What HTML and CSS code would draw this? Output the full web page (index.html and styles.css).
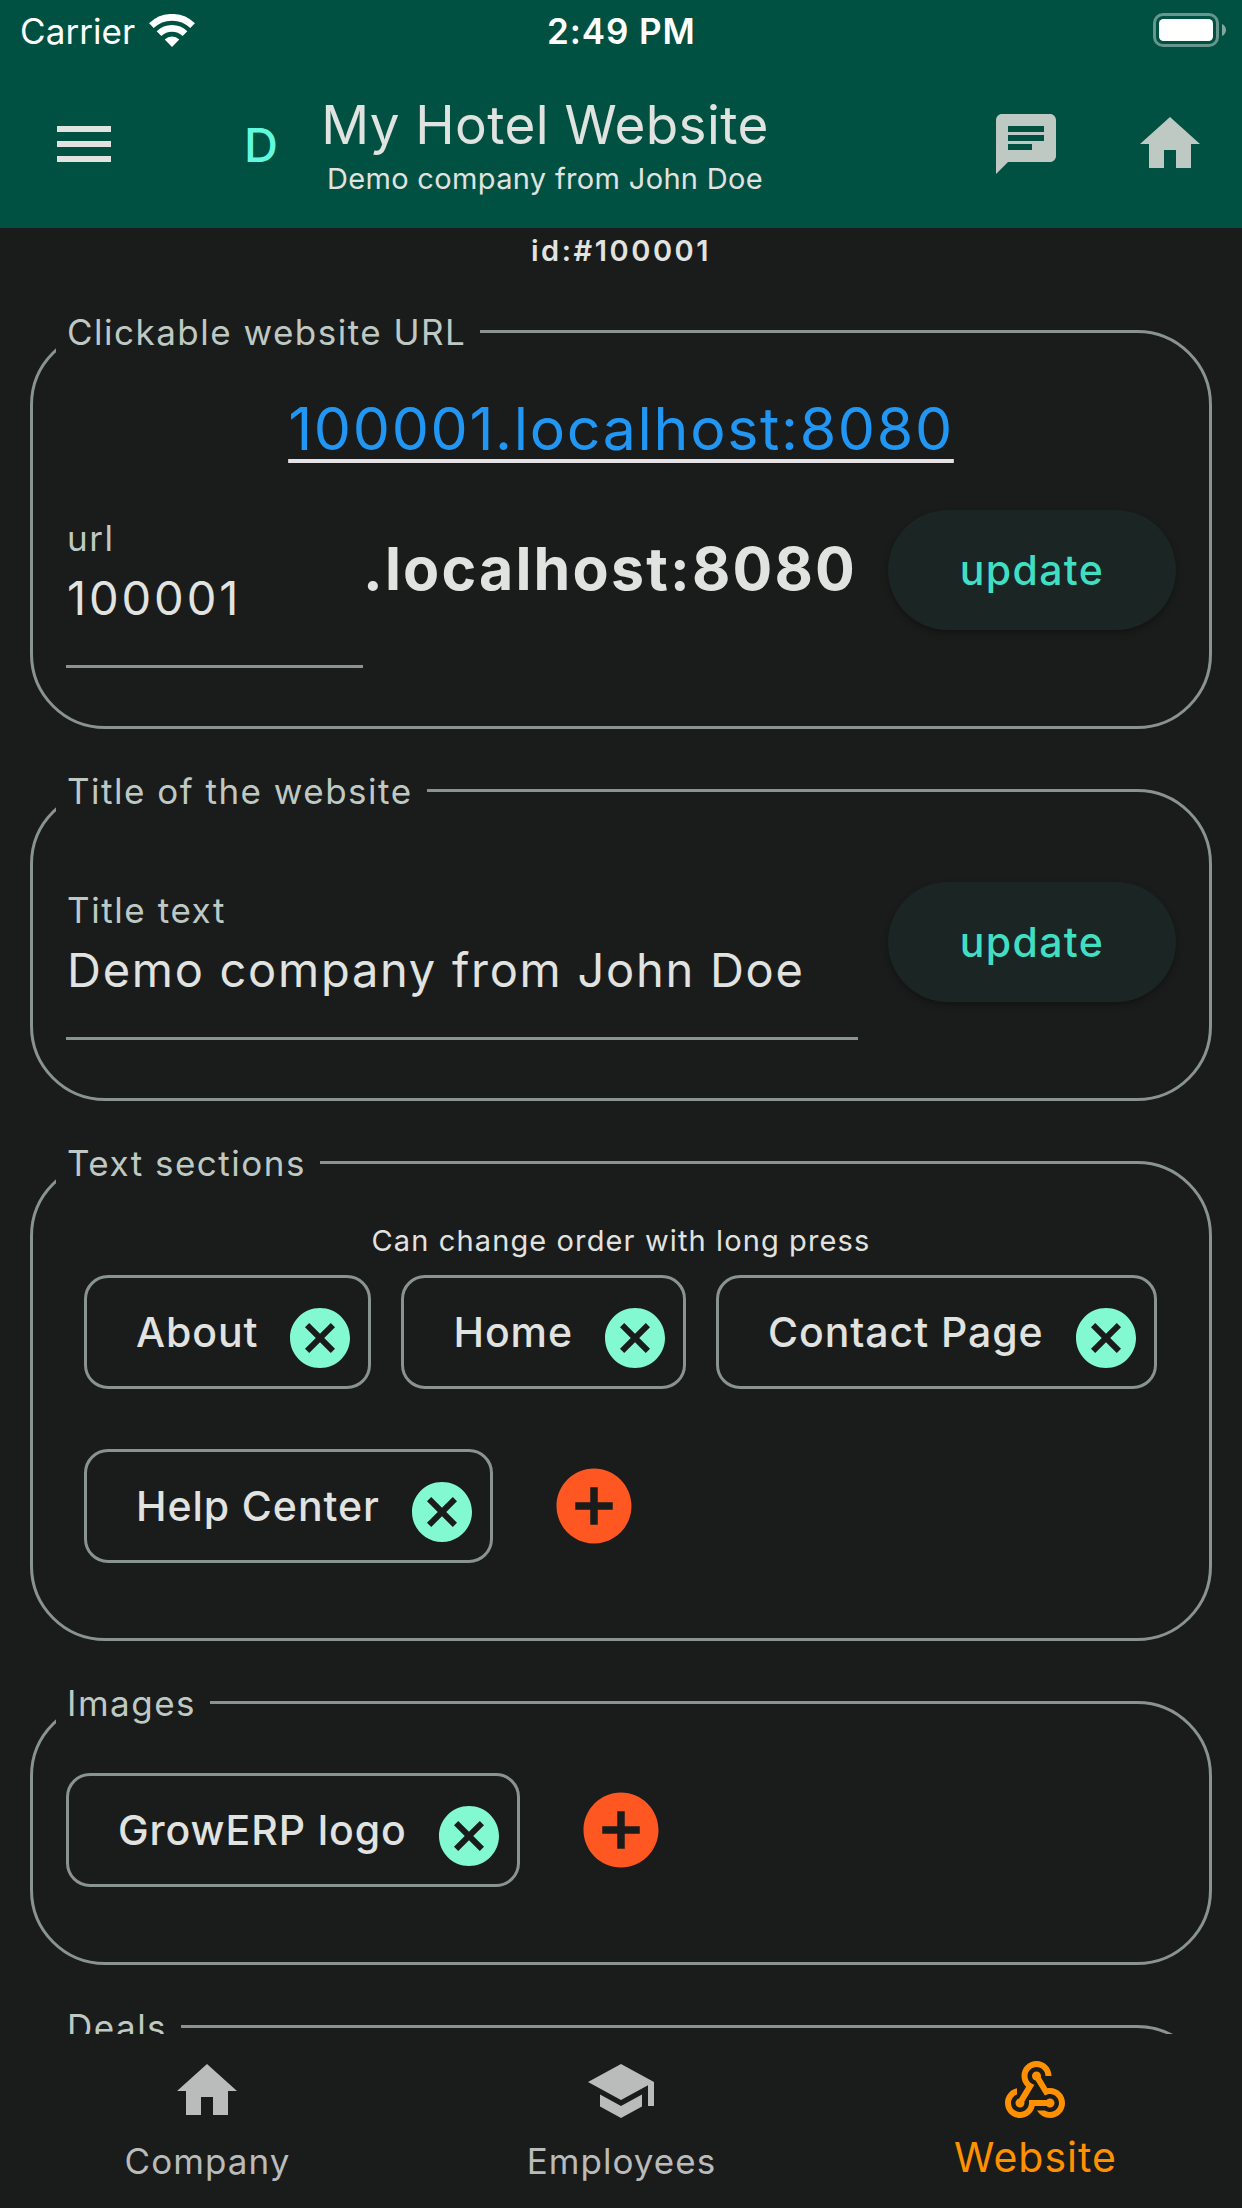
FILE: index.html
```html
<!DOCTYPE html>
<html lang="en">
<head>
<meta charset="utf-8">
<title>My Hotel Website</title>
<link rel="stylesheet" href="styles.css">
</head>
<body>
<svg class="defs" aria-hidden="true">
  <symbol id="home" viewBox="0 0 24 24"><path d="M10 20v-6h4v6h5v-8h3L12 3 2 12h3v8z"/></symbol>
  <symbol id="cancel" viewBox="0 0 24 24"><path d="M12 2C6.47 2 2 6.47 2 12s4.47 10 10 10 10-4.47 10-10S17.53 2 12 2zm5 13.59L15.59 17 12 13.41 8.41 17 7 15.59 10.59 12 7 8.41 8.41 7 12 10.59 15.59 7 17 8.41 13.41 12 17 15.59z"/></symbol>
  <symbol id="add" viewBox="0 0 24 24"><path d="M12 2C6.48 2 2 6.48 2 12s4.48 10 10 10 10-4.48 10-10S17.52 2 12 2zm5 11h-4v4h-2v-4H7v-2h4V7h2v4h4v2z"/></symbol>
</svg>

<header class="header">
  <div class="status">
    <div class="carrier">
      <span class="status-text">Carrier</span>
      <svg class="wifi" viewBox="-23 -33 46 33"><path class="wifi-arc" d="M-20.6-21.4A29.7 29.7 0 0 1 20.6-21.4M-13-13.4A18.7 18.7 0 0 1 13-13.4"/><path class="wifi-dot" d="M0 0L-7.3-7.6A10.5 10.5 0 0 1 7.3-7.6z"/></svg>
    </div>
    <span class="status-text time">2:49 PM</span>
    <svg class="battery" viewBox="0 0 74 34"><rect class="battery-shell" x="1.5" y="1.5" width="63" height="31" rx="8.5"/><rect x="6" y="6" width="54" height="22" rx="4.5"/><path class="battery-cap" d="M69 11c2.500 1 4 3.500 4 6s-1.500 5-4 6z"/></svg>
  </div>
  <div class="appbar">
    <svg class="icon menu" viewBox="0 0 24 24"><path d="M3 18h18v-2H3v2zm0-5h18v-2H3v2zm0-7v2h18V6H3z"/></svg>
    <span class="avatar">D</span>
    <div class="titles">
      <h1 class="title">My Hotel Website</h1>
      <p class="subtitle">Demo company from John Doe</p>
    </div>
    <div class="actions">
      <svg class="icon" viewBox="0 0 24 24"><path d="M20 2H4c-1.100 0-1.990.9-1.990 2L2 22l4-4h14c1.100 0 2-.9 2-2V4c0-1.100-.9-2-2-2zm-2 4v2H6V6h12zm-4 8H6v-2h8v2zm4-3H6V9h12v2z"/></svg>
      <svg class="icon"><use href="#home"/></svg>
    </div>
  </div>
</header>

<main class="content">
  <p class="record-id">id:#100001</p>

  <section class="card">
    <h2 class="legend">Clickable website URL</h2>
    <div class="link-line"><a class="link">100001.localhost:8080</a></div>
    <div class="form-row">
      <div class="field short">
        <span class="label">url</span>
        <span class="value digits">100001</span>
      </div>
      <span class="host">.localhost:8080</span>
      <button class="update">update</button>
    </div>
  </section>

  <section class="card">
    <h2 class="legend">Title of the website</h2>
    <div class="form-row lower">
      <div class="field long">
        <span class="label">Title text</span>
        <span class="value">Demo company from John Doe</span>
      </div>
      <button class="update">update</button>
    </div>
  </section>

  <section class="card chips-card">
    <h2 class="legend">Text sections</h2>
    <p class="note">Can change order with long press</p>
    <div class="chips inset">
      <div class="chip">About<svg class="chip-x"><use href="#cancel"/></svg></div>
      <div class="chip">Home<svg class="chip-x"><use href="#cancel"/></svg></div>
      <div class="chip">Contact Page<svg class="chip-x"><use href="#cancel"/></svg></div>
      <div class="chip">Help Center<svg class="chip-x"><use href="#cancel"/></svg></div>
      <svg class="add"><use href="#add"/></svg>
    </div>
  </section>

  <section class="card chips-card">
    <h2 class="legend">Images</h2>
    <div class="chips lone">
      <div class="chip">GrowERP logo<svg class="chip-x"><use href="#cancel"/></svg></div>
      <svg class="add"><use href="#add"/></svg>
    </div>
  </section>

  <section class="card last">
    <h2 class="legend">Deals</h2>
  </section>
</main>

<nav class="tabs">
  <div class="tab">
    <svg class="icon"><use href="#home"/></svg>
    <span class="tab-label">Company</span>
  </div>
  <div class="tab">
    <svg class="icon" viewBox="0 0 24 24"><path d="M5 13.180v4L12 21l7-3.820v-4L12 17l-7-3.820zM12 3L1 9l11 6 9-4.910V17h2V9L12 3z"/></svg>
    <span class="tab-label">Employees</span>
  </div>
  <div class="tab active">
    <svg class="icon" viewBox="0 0 24 24"><path d="M10,15h5.880c0.270-0.310,0.670-0.500,1.120-0.500c0.830,0,1.500,0.670,1.500,1.500c0,0.830-0.670,1.500-1.500,1.500c-0.440,0-0.840-0.190-1.120-0.500H11.900c-0.460,2.280-2.480,4-4.900,4c-2.760,0-5-2.240-5-5c0-2.420,1.720-4.440,4-4.900v2.070C4.840,13.580,4,14.700,4,16c0,1.650,1.350,3,3,3s3-1.350,3-3V15z M12.500,4c1.650,0,3,1.350,3,3h2c0-2.760-2.240-5-5-5s-5,2.240-5,5c0,1.430,0.600,2.710,1.550,3.620l-2.350,3.900C6.020,14.660,5.500,15.270,5.500,16c0,0.830,0.670,1.500,1.500,1.500s1.500-0.670,1.500-1.500c0-0.160-0.020-0.310-0.070-0.450l3.380-5.630C10.490,9.610,9.500,8.420,9.500,7C9.500,5.350,10.850,4,12.500,4z M17,13c-0.640,0-1.230,0.200-1.720,0.540l-3.050-5.070C11.530,8.350,11,7.740,11,7c0-0.830,0.670-1.500,1.500-1.500S14,6.170,14,7c0,0.150-0.020,0.290-0.060,0.430l2.190,3.650C16.410,11.030,16.700,11,17,11c2.760,0,5,2.240,5,5c0,2.760-2.240,5-5,5c-1.850,0-3.470-1.010-4.330-2.500l2.670,0C15.820,18.820,16.390,19,17,19c1.650,0,3-1.350,3-3S18.650,13,17,13z"/></svg>
    <span class="tab-label">Website</span>
  </div>
</nav>
</body>
</html>
```
FILE: styles.css
```css
* {
  box-sizing: border-box;
}

body {
  margin: 0;
  height: 2208px;
  display: flex;
  flex-direction: column;
  overflow: hidden;
  background: #1a1c1b;
  color: #e1e3e0;
  font-family: Inter, "Liberation Sans", sans-serif;
  white-space: nowrap;
}

h1, h2, p {
  margin: 0;
  font-weight: 400;
}

.defs {
  display: none;
}

.icon {
  width: 72px;
  height: 72px;
  flex: none;
  fill: currentColor;
}

/* Header */
.header {
  flex: none;
  height: 228px;
  background: #005142;
}

.status {
  height: 60px;
  padding: 0 15px 0 20px;
  display: grid;
  grid-template-columns: 527px 1fr auto;
  align-items: center;
  color: #fff;
  fill: #fff;
}

.carrier {
  display: flex;
  align-items: center;
  gap: 14px;
}

.status-text {
  padding-top: 2px;
  font-size: 35px;
  line-height: 36px;
  letter-spacing: 0.08px;
}

.time {
  font-weight: 600;
  letter-spacing: 0.9px;
}

.wifi {
  width: 46px;
  height: 33px;
}

.wifi-arc {
  fill: none;
  stroke: #fff;
  stroke-width: 6.7;
}

.battery {
  width: 74px;
  height: 34px;
}

.battery-shell {
  fill: none;
  stroke: #fff;
  stroke-width: 3;
  opacity: 0.4;
}

.battery-cap {
  opacity: 0.5;
}

.appbar {
  height: 168px;
  padding: 0 36px 0 48px;
  display: flex;
  align-items: center;
}

.avatar {
  margin-left: 124px;
  padding-top: 2px;
  width: 34px;
  font-size: 47px;
  font-weight: 500;
  line-height: 72px;
  color: #62fadf;
}

.titles {
  margin-left: 42px;
  padding-top: 4px;
  width: 450px;
  display: flex;
  flex-direction: column;
  align-items: center;
  gap: 6px;
}

.title {
  font-size: 53px;
  line-height: 60px;
  letter-spacing: 0.42px;
}

.subtitle {
  font-size: 29px;
  line-height: 36px;
  letter-spacing: 0.34px;
}

.actions {
  margin-left: auto;
  display: flex;
  gap: 72px;
  color: #bfc9c3;
}

/* Scrolling content */
.content {
  flex: none;
  height: 1806px;
  padding: 5px 30px 0;
  overflow: hidden;
}

.record-id {
  margin-bottom: 61px;
  text-align: center;
  font-size: 29px;
  font-weight: 600;
  line-height: 36px;
  letter-spacing: 2.55px;
}

.card {
  margin-bottom: 60px;
  padding: 0 33px 58px;
  display: flow-root;
  border: 3px solid #899390;
  border-radius: 75px;
}

.chips-card {
  padding-bottom: 75px;
}

.last {
  height: 260px;
}

.legend {
  width: fit-content;
  margin: -26px 0 0 -10px;
  padding: 0 14px 0 11px;
  background: #1a1c1b;
  color: #bfc9c4;
  font-size: 35px;
  line-height: 50px;
  letter-spacing: 1.49px;
}

.link-line {
  margin-top: 36px;
  text-align: center;
}

.link {
  display: block;
  font-size: 59px;
  line-height: 72px;
  letter-spacing: 1.68px;
  color: #2196f3;
  text-decoration: underline 4px #e6e1e5;
  text-underline-offset: 9px;
  text-decoration-skip-ink: none;
}

.form-row {
  margin-top: 45px;
  display: flex;
  align-items: flex-start;
}

.form-row.lower {
  margin-top: 66px;
}

.field {
  padding: 7px 0 39px 1px;
  display: flex;
  flex-direction: column;
  gap: 11px;
  border-bottom: 3px solid #899390;
}

.short {
  width: 297px;
}

.long {
  width: 792px;
}

.label {
  font-size: 35px;
  line-height: 42px;
  letter-spacing: 1.58px;
  color: #bfc9c4;
}

.value {
  font-size: 47px;
  line-height: 56px;
  letter-spacing: 1.73px;
}

.value.digits {
  letter-spacing: 2.9px;
}

.host {
  margin: 23px 0 0;
  font-size: 59px;
  font-weight: 700;
  line-height: 72px;
  letter-spacing: 2.2px;
}

.update {
  width: 288px;
  height: 120px;
  margin-left: auto;
  padding: 0;
  border: 0;
  border-radius: 60px;
  background: #1b2523;
  box-shadow: 0 3px 6px rgba(0, 0, 0, 0.3);
  color: #40dfc3;
  font: 500 41px/50px Inter, "Liberation Sans", sans-serif;
  letter-spacing: 1.36px;
}

.note {
  margin: 35px 0 16px;
  text-align: center;
  font-size: 29px;
  line-height: 36px;
  letter-spacing: 1.12px;
}

.chips {
  display: flex;
  flex-wrap: wrap;
  align-items: center;
  gap: 60px 30px;
}

.chips.inset {
  padding-left: 18px;
}

.chips.lone {
  margin-top: 45px;
}

.chip {
  height: 114px;
  padding: 0 12px 0 49px;
  display: flex;
  align-items: center;
  gap: 26px;
  border: 3px solid #899390;
  border-radius: 24px;
  font-size: 41px;
  font-weight: 500;
  letter-spacing: 0.93px;
}

.chip-x {
  width: 72px;
  height: 72px;
  margin-top: 12px;
  fill: #83f9d2;
}

.add {
  width: 90px;
  height: 90px;
  margin-left: 26px;
  fill: #ff5722;
}

/* Bottom navigation */
.tabs {
  height: 174px;
  padding-top: 21px;
  display: grid;
  grid-template-columns: repeat(3, 1fr);
}

.tab {
  display: flex;
  flex-direction: column;
  align-items: center;
  gap: 13px;
  color: #babbbb;
}

.tab-label {
  padding-left: 1px;
  font-size: 35px;
  line-height: 42px;
  letter-spacing: 1.05px;
}

.active {
  gap: 6px;
  color: #ff9100;
}

.active .tab-label {
  font-size: 41px;
  line-height: 48px;
  letter-spacing: 1px;
}
```
